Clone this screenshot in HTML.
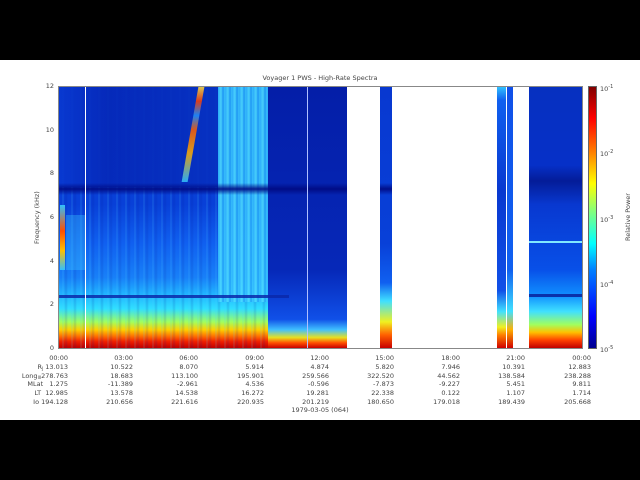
<!DOCTYPE html>
<html><head><meta charset="utf-8"><style>
*{margin:0;padding:0;box-sizing:border-box}
body{width:640px;height:480px;background:#000;position:relative;overflow:hidden;font-family:"DejaVu Sans","Liberation Sans",sans-serif;font-size:6.5px;color:#444}
#pg{position:absolute;left:0;top:60px;width:640px;height:360px;background:#fff}
.a{position:absolute}
.t{position:absolute;white-space:nowrap;line-height:8.8px}
.r{text-align:right}
.c{transform:translateX(-50%)}
sub{font-size:4px;line-height:0;vertical-align:-1px}
</style></head><body>
<div id="pg"></div>
<div class="t c" style="left:320px;top:74px">Voyager 1 PWS - High-Rate Spectra</div>
<div class="a" style="left:58px;top:86px;width:525px;height:263px;border:1px solid #888;background:#fff"></div>
<div class="a" style="left:59px;top:87px;width:288px;height:261px;background:linear-gradient(to top,#c00000 0%,#f02000 2.5%,#ff7000 4.5%,#ffd000 7%,#a0ff60 10%,#30e0ff 15%,#20b0ff 21%,#1880f8 27%,#1060f0 40%,#0840d8 55%,#0838d0 100%)"></div>
<div class="a" style="left:59px;top:87px;width:288px;height:261px;background:repeating-linear-gradient(to right,rgba(80,200,255,.0) 0px,rgba(80,200,255,.0) 3px,rgba(80,200,255,.25) 4px,rgba(80,200,255,0) 5px,rgba(0,20,150,.15) 7px,rgba(0,0,0,0) 9px)"></div>
<div class="a" style="left:268px;top:87px;width:79px;height:261px;background:linear-gradient(to top,#c80000 0%,#ff5000 2%,#e8e020 4%,#40c0ff 7%,#1050e8 11%,#0628b8 30%,#041ea8 100%)"></div>
<div class="a" style="left:59px;top:87px;width:160px;height:100px;background:linear-gradient(to right,#0838d0,#0528b8 30%,#0630c0);opacity:.9"></div>
<div class="a" style="left:218px;top:87px;width:50px;height:215px;background:repeating-linear-gradient(to right,#30b8ff 0px,#50e0ff 3px,#20a0f8 5px,#40d0ff 7px);opacity:.9"></div>
<div class="a" style="left:190px;top:87px;width:6px;height:95px;background:linear-gradient(to top,#30c0ff,#ffb000 30%,#ff6000 55%,#2090ff 70%,#ff4000 85%,#ffe040);transform:skewX(-10deg);opacity:.85"></div>
<div class="a" style="left:60px;top:205px;width:5px;height:65px;background:linear-gradient(to top,#30c0ff,#ffc000 30%,#ff5000 60%,#30c0ff)"></div>
<div class="a" style="left:66px;top:215px;width:20px;height:55px;background:rgba(60,200,255,.35)"></div>
<div class="a" style="left:59px;top:183px;width:288px;height:12px;background:linear-gradient(to bottom,rgba(0,10,130,0),rgba(0,10,130,.9),rgba(0,10,130,0))"></div>
<div class="a" style="left:59px;top:295px;width:230px;height:3px;background:rgba(10,40,170,.85)"></div>
<div class="a" style="left:85px;top:87px;width:1px;height:261px;background:#fff"></div>
<div class="a" style="left:307px;top:87px;width:1px;height:261px;background:#b0c0ff"></div>
<div class="a" style="left:380px;top:87px;width:12px;height:261px;background:linear-gradient(to top,#c80000 0%,#ff6000 5%,#f0f020 10%,#40e0ff 18%,#1060f0 25%,#0840d8 40%,#0838d0 100%)"></div>
<div class="a" style="left:380px;top:183px;width:12px;height:12px;background:linear-gradient(to bottom,rgba(0,10,130,0),rgba(0,10,130,.9),rgba(0,10,130,0))"></div>
<div class="a" style="left:497px;top:87px;width:9px;height:261px;background:linear-gradient(to top,#d00000 0%,#ff8000 5%,#f0f020 8%,#40e0ff 14%,#1050e8 22%,#0838d0 60%,#1060f0 95%,#30c0ff 100%)"></div>
<div class="a" style="left:507px;top:87px;width:6px;height:261px;background:linear-gradient(to top,#d00000 0%,#ffb000 7%,#40e0ff 14%,#1060f0 30%,#1050e8 100%)"></div>
<div class="a" style="left:529px;top:87px;width:53px;height:261px;background:linear-gradient(to top,#c00000 0%,#ff4000 3%,#ffc000 6%,#a0ff60 9%,#40e0ff 14%,#1090ff 20%,#0850e8 30%,#0838d0 55%,#041c98 64%,#0630c8 70%,#0630c0 100%)"></div>
<div class="a" style="left:529px;top:241px;width:53px;height:2px;background:#80e8ff"></div>
<div class="a" style="left:529px;top:294px;width:53px;height:3px;background:rgba(10,40,160,.9)"></div>
<div class="a" style="left:588px;top:86px;width:9px;height:263px;border:1px solid #666;background:linear-gradient(to top,#00008f,#0000ff 12%,#0080ff 30%,#00ffff 40%,#80ff80 52%,#ffff00 63%,#ff8000 75%,#ff0000 88%,#800000)"></div>
<div class="t" style="left:600px;top:83px">10<sup style="font-size:5px">-1</sup></div>
<div class="t" style="left:600px;top:148px">10<sup style="font-size:5px">-2</sup></div>
<div class="t" style="left:600px;top:214px">10<sup style="font-size:5px">-3</sup></div>
<div class="t" style="left:600px;top:279px">10<sup style="font-size:5px">-4</sup></div>
<div class="t" style="left:600px;top:344px">10<sup style="font-size:5px">-5</sup></div>
<div class="t" style="left:624px;top:217px;transform:rotate(-90deg) translateX(-50%);transform-origin:0 0">Relative Power</div>
<div class="t r" style="left:36px;width:18px;top:82px">12</div>
<div class="t r" style="left:36px;width:18px;top:126px">10</div>
<div class="t r" style="left:36px;width:18px;top:169px">8</div>
<div class="t r" style="left:36px;width:18px;top:213px">6</div>
<div class="t r" style="left:36px;width:18px;top:257px">4</div>
<div class="t r" style="left:36px;width:18px;top:300px">2</div>
<div class="t r" style="left:36px;width:18px;top:344px">0</div>
<div class="t" style="left:33px;top:244px;transform:rotate(-90deg);transform-origin:0 0">Frequency (kHz)</div>
<div class="t r" style="left:10px;width:58px;top:354px">00:00<br>R<sub>J</sub> 13.013<br>Long<sub>III</sub>278.763<br>MLat&nbsp;&nbsp; 1.275<br>LT&nbsp; 12.985<br>Io 194.128</div>
<div class="t r" style="left:80px;width:53px;top:354px">03:00<br>10.522<br>18.683<br>-11.389<br>13.578<br>210.656</div>
<div class="t r" style="left:145px;width:53px;top:354px">06:00<br>8.070<br>113.100<br>-2.961<br>14.538<br>221.616</div>
<div class="t r" style="left:211px;width:53px;top:354px">09:00<br>5.914<br>195.901<br>4.536<br>16.272<br>220.935</div>
<div class="t r" style="left:276px;width:53px;top:354px">12:00<br>4.874<br>259.566<br>-0.596<br>19.281<br>201.219</div>
<div class="t r" style="left:341px;width:53px;top:354px">15:00<br>5.820<br>322.520<br>-7.873<br>22.338<br>180.650</div>
<div class="t r" style="left:407px;width:53px;top:354px">18:00<br>7.946<br>44.562<br>-9.227<br>0.122<br>179.018</div>
<div class="t r" style="left:472px;width:53px;top:354px">21:00<br>10.391<br>138.584<br>5.451<br>1.107<br>189.439</div>
<div class="t r" style="left:538px;width:53px;top:354px">00:00<br>12.883<br>238.288<br>9.811<br>1.714<br>205.668</div>
<div class="t c" style="left:320px;top:406px">1979-03-05 (064)</div>
</body></html>
